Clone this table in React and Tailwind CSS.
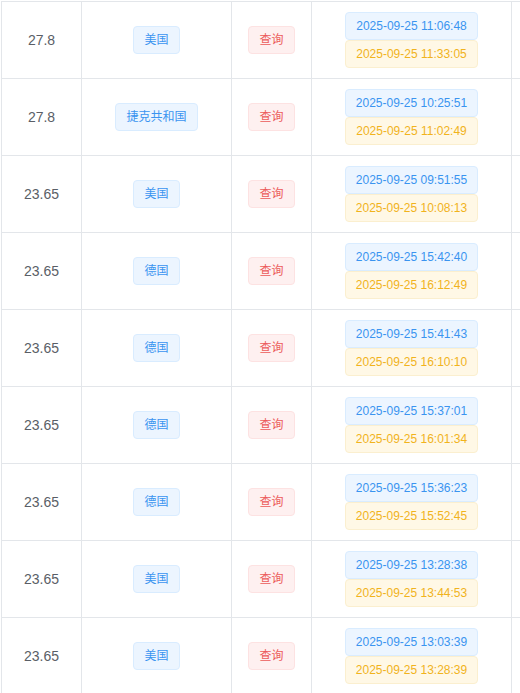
import React from "react";

const rows = [
  ["27.8", "美国", "2025-09-25 11:06:48", "2025-09-25 11:33:05"],
  ["27.8", "捷克共和国", "2025-09-25 10:25:51", "2025-09-25 11:02:49"],
  ["23.65", "美国", "2025-09-25 09:51:55", "2025-09-25 10:08:13"],
  ["23.65", "德国", "2025-09-25 15:42:40", "2025-09-25 16:12:49"],
  ["23.65", "德国", "2025-09-25 15:41:43", "2025-09-25 16:10:10"],
  ["23.65", "德国", "2025-09-25 15:37:01", "2025-09-25 16:01:34"],
  ["23.65", "德国", "2025-09-25 15:36:23", "2025-09-25 15:52:45"],
  ["23.65", "美国", "2025-09-25 13:28:38", "2025-09-25 13:44:53"],
  ["23.65", "美国", "2025-09-25 13:03:39", "2025-09-25 13:28:39"],
];

const font = { fontFamily: '"Liberation Sans", "Noto Sans CJK SC", sans-serif' };

export default function App() {
  return (
    <div className="w-[520px] h-[693px] overflow-hidden bg-white pl-[1px] pt-[1px]" style={font}>
      <div className="border-t border-l border-[#e3e6ea] w-[600px]">
        {rows.map((r, i) => (
          <div key={i} className="flex h-[77px] border-b border-[#e3e6ea]">
            <div className="w-[80px] shrink-0 border-r border-[#e3e6ea] flex items-center justify-center text-[14px] text-[#5a5e66]">
              {r[0]}
            </div>
            <div className="w-[150px] shrink-0 border-r border-[#e3e6ea] flex items-center justify-center">
              <span className="inline-flex items-center h-[28px] px-[10px] rounded-[4px] border border-[#d9ecff] bg-[#ecf5ff] text-[#3a94f0] text-[12px] whitespace-nowrap">
                {r[1]}
              </span>
            </div>
            <div className="w-[80px] shrink-0 border-r border-[#e3e6ea] flex items-center justify-center">
              <span className="inline-flex items-center h-[28px] px-[10px] rounded-[4px] border border-[#fde2e2] bg-[#fef0f0] text-[#ec5b5b] text-[12px] whitespace-nowrap">
                查询
              </span>
            </div>
            <div className="w-[200px] shrink-0 border-r border-[#e3e6ea] flex flex-col items-center justify-center">
              <span className="inline-flex items-center h-[28px] px-[10px] rounded-[4px] border border-[#d9ecff] bg-[#ecf5ff] text-[#3a94f0] text-[12px] whitespace-nowrap">
                {r[2]}
              </span>
              <span className="inline-flex items-center h-[28px] px-[10px] rounded-[4px] border border-[#fbefcf] bg-[#fff8e6] text-[#f1b31c] text-[12px] whitespace-nowrap">
                {r[3]}
              </span>
            </div>
            <div className="flex-1" />
          </div>
        ))}
      </div>
    </div>
  );
}
